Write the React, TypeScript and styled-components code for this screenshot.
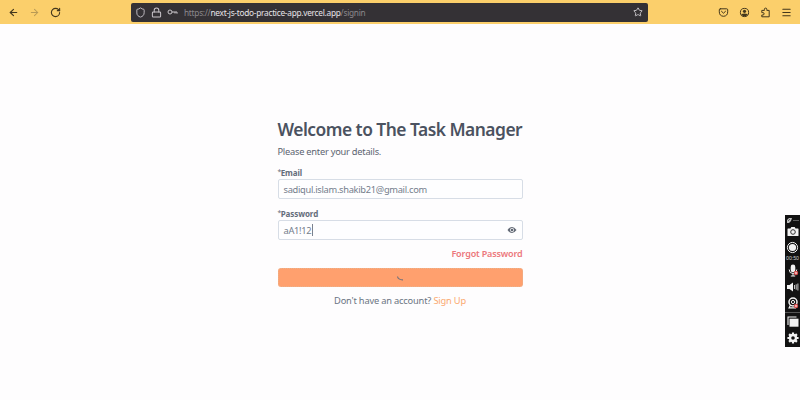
import React from "react";
import styled, { createGlobalStyle } from "styled-components";
import { ArrowLeft, ArrowRight, RotateCw, Shield, Lock, Star, Menu } from "lucide-react";

const GlobalStyle = createGlobalStyle`
  * { box-sizing: border-box; }
  body { margin: 0; background: #fefdfe; font-family: "Noto Sans", "Open Sans", sans-serif; }
  svg { display: block; flex: none; }
`;

const Page = styled.div`
  height: 400px;
  display: flex;
  flex-direction: column;
  overflow: hidden;
`;

const Toolbar = styled.header`
  height: 24px;
  flex: none;
  display: flex;
  align-items: center;
  background: #fbcf6b;
  color: #4a3d1f;
`;

const NavButtons = styled.nav`
  width: 131px;
  padding-left: 8px;
  display: flex;
  gap: 10px;
`;

const IconButton = styled.button<{ $faded?: boolean }>`
  padding: 0;
  border: 0;
  background: none;
  color: ${(p) => (p.$faded ? "#b99a55" : "#43371c")};
`;

const AddressBar = styled.div`
  width: 517px;
  height: 19px;
  padding: 0 5px 0 4px;
  display: flex;
  align-items: center;
  border-radius: 2px;
  background: #343135;
  color: #c9c5ca;
`;

const SiteIcons = styled.div`
  width: 49px;
  display: flex;
  align-items: center;
  gap: 5px;
`;

const Url = styled.div`
  flex: 1;
  font: 8.3px/19px "Noto Sans", sans-serif;
  letter-spacing: -0.27px;
  color: #8b888c;
  white-space: pre;
`;

const Host = styled.span`
  color: #e6e3e7;
`;

const Actions = styled.div`
  flex: 1;
  display: flex;
  justify-content: flex-end;
  gap: 10px;
  padding-right: 8px;
`;

const Main = styled.main`
  flex: 1;
  display: flex;
  justify-content: center;
`;

const Form = styled.form`
  width: 245px;
  padding-top: 93px;
  display: flex;
  flex-direction: column;
  color: #5c6470;
`;

const Title = styled.h1`
  margin: 0;
  font-size: 17.4px;
  line-height: 25px;
  font-weight: 600;
  letter-spacing: -0.51px;
  color: #4b5260;
  white-space: nowrap;
`;

const Subtitle = styled.p`
  margin: 2px 0 9px;
  font-size: 9.3px;
  line-height: 15px;
  height: 14px;
  letter-spacing: -0.25px;
`;

const Label = styled.label`
  height: 12px;
  display: flex;
  font-size: 8px;
  line-height: 12px;
  font-weight: 700;
  letter-spacing: -0.08px;
  color: #646c7a;
`;

const Asterisk = styled.span`
  font-size: 7px;
  line-height: 9px;
  font-weight: 400;
  letter-spacing: -0.7px;
`;

const Field = styled.div`
  height: 20px;
  margin-bottom: 9px;
  padding: 0 5px;
  display: flex;
  align-items: center;
  border: 1px solid #d7dde6;
  border-radius: 2px;
  background: #fefeff;
  color: #747d8c;
  font-size: 9.3px;
  letter-spacing: -0.3px;
`;

const Caret = styled.span`
  width: 1px;
  height: 12px;
  margin-left: 1px;
  background: #7b828e;
`;

const Trailing = styled.span`
  margin-left: auto;
`;

const Forgot = styled.a`
  align-self: flex-end;
  height: 12px;
  font-size: 9px;
  line-height: 10px;
  font-weight: 600;
  letter-spacing: -0.16px;
  color: #ec777b;
`;

const Submit = styled.button`
  height: 19px;
  margin: 7px 0;
  padding: 2px 0 0;
  display: flex;
  align-items: center;
  justify-content: center;
  border: 1px dotted #eab28d;
  border-radius: 3px;
  background: #ffa06e;
`;

const Signup = styled.p`
  margin: 0;
  text-align: center;
  font-size: 9.3px;
  line-height: 14px;
  letter-spacing: -0.19px;
  color: #6b7482;
`;

const SignupLink = styled.a`
  color: #fba970;
`;

const Recorder = styled.aside`
  position: absolute;
  top: 215px;
  left: 785px;
  width: 15px;
  height: 132px;
  padding-top: 2px;
  display: flex;
  flex-direction: column;
  align-items: center;
  background: #121212;
  color: #f3f3f3;
`;

const Tool = styled.div<{ $h: number }>`
  height: ${(p) => p.$h}px;
  display: flex;
  align-items: center;
  justify-content: center;
`;

const Timer = styled.div`
  height: 7px;
  font: 5.2px/7px "Liberation Sans", sans-serif;
  color: #d0d0d0;
`;

const Divider = styled.div`
  width: 15px;
  height: 1px;
  margin: 1px 0;
  background: #555;
`;

const KeyIcon = () => (
  <svg width="11" height="10" viewBox="0 0 11 10" fill="none" stroke="currentColor" strokeWidth="1">
    <circle cx="3" cy="5" r="2" />
    <path d="M5 5h5v1.7M8 5v1.5" />
  </svg>
);

const PocketIcon = () => (
  <svg width="11" height="11" viewBox="0 0 11 11" fill="none" stroke="currentColor" strokeWidth="1" strokeLinecap="round" strokeLinejoin="round">
    <path d="M2.3 1.8h6.4q1 0 1 1v2q0 4.2-4.2 4.5Q1.3 9 1.3 4.8v-2q0-1 1-1ZM3.5 4.3l2 1.9 2-1.9" />
  </svg>
);

const AccountIcon = () => (
  <svg width="11" height="11" viewBox="0 0 11 11">
    <circle cx="5.5" cy="5.5" r="4.1" fill="none" stroke="currentColor" />
    <circle cx="5.5" cy="4.3" r="1.6" fill="currentColor" />
    <path d="M2.5 7q3-1.2 6 0v1q-3 2.5-6 0Z" fill="currentColor" />
  </svg>
);

const ExtensionsIcon = () => (
  <svg width="11" height="11" viewBox="0 0 11 11" fill="none" stroke="currentColor" strokeWidth="1" strokeLinejoin="round">
    <path d="M1.8 3.4h2.6V2.3a1.2 1.2 0 0 1 2.4 0v1.1h2.4v6.4H1.8V8h1.1a1.1 1.1 0 0 0 0-2.4H1.8Z" />
  </svg>
);

const EyeIcon = () => (
  <svg width="10" height="8" viewBox="0 0 10 8">
    <path d="M.5 4Q5-2.2 9.5 4 5 10.2.5 4Z" fill="#626975" />
    <circle cx="5" cy="4" r="2" fill="#fff" />
    <circle cx="5" cy="4" r="1.3" fill="#626975" />
  </svg>
);

const SpinnerIcon = () => (
  <svg width="9" height="9" viewBox="0 0 9 9" fill="none" stroke="#77727a" strokeWidth="1.2">
    <path d="M1.5 2.5Q2.2 6 7 5.8" />
  </svg>
);

const DragIcon = () => (
  <svg width="13" height="7" viewBox="0 0 13 7" fill="currentColor">
    <path d="M1 3l2-2h3L5 4 3 6H1Z" fill="#bdbdbd" />
    <path d="M2 4l2-2" stroke="#222" strokeWidth=".6" />
    <path d="M7.5 3h1v1h-1zM9.5 3h1v1h-1zM11.5 3h1v1h-1z" fill="#aaa" />
  </svg>
);

const CameraIcon = () => (
  <svg width="12" height="11" viewBox="0 0 12 11">
    <path d="M1 2.5h2.5L4.3 1h3.4l.8 1.5H11q.5 0 .5.5v6.5q0 .5-.5.5H1q-.5 0-.5-.5V3q0-.5.5-.5Z" fill="currentColor" />
    <circle cx="6" cy="6" r="2.3" fill="none" stroke="#333" />
  </svg>
);

const RecordIcon = () => (
  <svg width="13" height="13" viewBox="0 0 13 13">
    <circle cx="6.5" cy="6.5" r="5.1" fill="none" stroke="currentColor" />
    <circle cx="6.5" cy="6.5" r="3.6" fill="currentColor" />
  </svg>
);

const MutedBadge = () => (
  <>
    <circle cx="9" cy="9" r="2.2" fill="#d95050" />
    <path d="M8.1 8.1l1.8 1.8m0-1.8L8.1 9.9" stroke="#fff" strokeWidth=".6" />
  </>
);

const MicIcon = () => (
  <svg width="12" height="13" viewBox="0 0 12 13">
    <rect x="3.7" y="0.6" width="4.6" height="7.6" rx="2.3" fill="currentColor" />
    <path d="M2.2 5.5Q2.2 9.5 6 9.5T9.8 5.5M6 9.5V12M3.8 12h4.4" fill="none" stroke="currentColor" />
    <MutedBadge />
  </svg>
);

const SpeakerIcon = () => (
  <svg width="13" height="12" viewBox="0 0 13 12">
    <path d="M1 4h2.5L7 1.5v9L3.5 8H1Z" fill="currentColor" />
    <path d="M8.5 4v4M10.2 3.3v5.4M11.9 2.5v7" stroke="currentColor" strokeWidth=".8" />
  </svg>
);

const WebcamIcon = () => (
  <svg width="12" height="12" viewBox="0 0 12 12">
    <circle cx="6" cy="5" r="4" fill="none" stroke="currentColor" strokeWidth="1.5" />
    <circle cx="6" cy="5" r="1.6" fill="none" stroke="currentColor" />
    <path d="M3.5 8L2 10.9h7" fill="none" stroke="currentColor" strokeWidth="1.1" />
    <MutedBadge />
  </svg>
);

const WindowsIcon = () => (
  <svg width="12" height="12" viewBox="0 0 12 12">
    <path d="M1 9V1h8.5" fill="none" stroke="currentColor" strokeWidth="1.1" />
    <rect x="2.5" y="2.7" width="9" height="8" fill="currentColor" />
  </svg>
);

const GearIcon = () => (
  <svg width="12" height="12" viewBox="0 0 12 12">
    <path d="M6 .4v11.2M.4 6h11.2M2.1 2.1l7.8 7.8M9.9 2.1L2.1 9.9" stroke="currentColor" strokeWidth="2.2" />
    <circle cx="6" cy="6" r="3" fill="#121212" stroke="currentColor" strokeWidth="2.4" />
  </svg>
);

export default function App() {
  return (
    <Page>
      <GlobalStyle />
      <Toolbar>
        <NavButtons>
          <IconButton aria-label="Back"><ArrowLeft size={11} strokeWidth={2.5} /></IconButton>
          <IconButton $faded aria-label="Forward"><ArrowRight size={11} strokeWidth={2.2} /></IconButton>
          <IconButton aria-label="Reload"><RotateCw size={11} strokeWidth={2.4} /></IconButton>
        </NavButtons>
        <AddressBar>
          <SiteIcons>
            <Shield size={11} strokeWidth={2} />
            <Lock size={11} strokeWidth={2.2} />
            <KeyIcon />
          </SiteIcons>
          <Url>https://<Host>next-js-todo-practice-app.vercel.app</Host>/signin</Url>
          <Star size={10} strokeWidth={2.3} />
        </AddressBar>
        <Actions>
          <IconButton aria-label="Pocket"><PocketIcon /></IconButton>
          <IconButton aria-label="Account"><AccountIcon /></IconButton>
          <IconButton aria-label="Extensions"><ExtensionsIcon /></IconButton>
          <IconButton aria-label="Menu"><Menu size={11} strokeWidth={2.2} /></IconButton>
        </Actions>
      </Toolbar>
      <Main>
        <Form>
          <Title>Welcome to The Task Manager</Title>
          <Subtitle>Please enter your details.</Subtitle>
          <Label><Asterisk>*</Asterisk>Email</Label>
          <Field>sadiqul.islam.shakib21@gmail.com</Field>
          <Label><Asterisk>*</Asterisk>Password</Label>
          <Field>
            aA1!12<Caret />
            <Trailing><EyeIcon /></Trailing>
          </Field>
          <Forgot>Forgot Password</Forgot>
          <Submit type="button" aria-label="Signing in"><SpinnerIcon /></Submit>
          <Signup>Don't have an account? <SignupLink>Sign Up</SignupLink></Signup>
        </Form>
      </Main>
      <Recorder>
        <Tool $h={7}><DragIcon /></Tool>
        <Tool $h={15}><CameraIcon /></Tool>
        <Tool $h={16}><RecordIcon /></Tool>
        <Timer>00:50</Timer>
        <Tool $h={17}><MicIcon /></Tool>
        <Tool $h={15}><SpeakerIcon /></Tool>
        <Tool $h={17}><WebcamIcon /></Tool>
        <Divider />
        <Tool $h={16}><WindowsIcon /></Tool>
        <Tool $h={16}><GearIcon /></Tool>
      </Recorder>
    </Page>
  );
}
